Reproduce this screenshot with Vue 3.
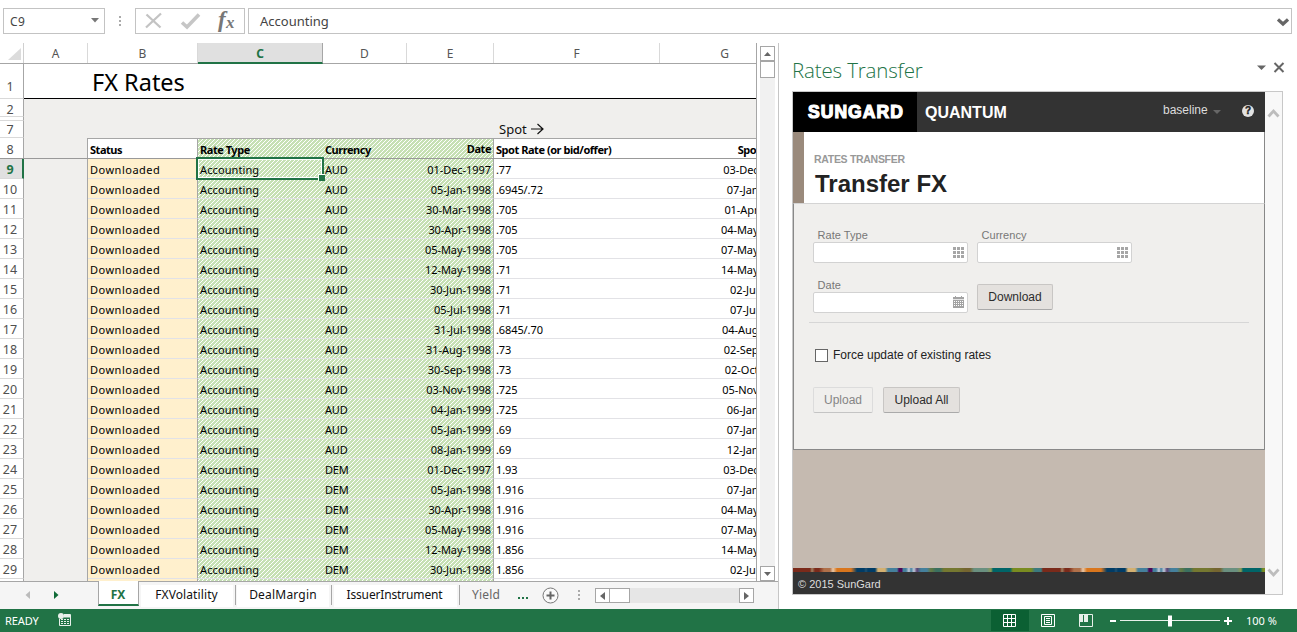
<script setup>
const rows = [
  ['Downloaded', 'Accounting', 'AUD', '01-Dec-1997', '.77', '03-Dec-1997'],
  ['Downloaded', 'Accounting', 'AUD', '05-Jan-1998', '.6945/.72', '07-Jan-1998'],
  ['Downloaded', 'Accounting', 'AUD', '30-Mar-1998', '.705', '01-Apr-1998'],
  ['Downloaded', 'Accounting', 'AUD', '30-Apr-1998', '.705', '04-May-1998'],
  ['Downloaded', 'Accounting', 'AUD', '05-May-1998', '.705', '07-May-1998'],
  ['Downloaded', 'Accounting', 'AUD', '12-May-1998', '.71', '14-May-1998'],
  ['Downloaded', 'Accounting', 'AUD', '30-Jun-1998', '.71', '02-Jul-1998'],
  ['Downloaded', 'Accounting', 'AUD', '05-Jul-1998', '.71', '07-Jul-1998'],
  ['Downloaded', 'Accounting', 'AUD', '31-Jul-1998', '.6845/.70', '04-Aug-1998'],
  ['Downloaded', 'Accounting', 'AUD', '31-Aug-1998', '.73', '02-Sep-1998'],
  ['Downloaded', 'Accounting', 'AUD', '30-Sep-1998', '.73', '02-Oct-1998'],
  ['Downloaded', 'Accounting', 'AUD', '03-Nov-1998', '.725', '05-Nov-1998'],
  ['Downloaded', 'Accounting', 'AUD', '04-Jan-1999', '.725', '06-Jan-1999'],
  ['Downloaded', 'Accounting', 'AUD', '05-Jan-1999', '.69', '07-Jan-1999'],
  ['Downloaded', 'Accounting', 'AUD', '08-Jan-1999', '.69', '12-Jan-1999'],
  ['Downloaded', 'Accounting', 'DEM', '01-Dec-1997', '1.93', '03-Dec-1997'],
  ['Downloaded', 'Accounting', 'DEM', '05-Jan-1998', '1.916', '07-Jan-1998'],
  ['Downloaded', 'Accounting', 'DEM', '30-Apr-1998', '1.916', '04-May-1998'],
  ['Downloaded', 'Accounting', 'DEM', '05-May-1998', '1.916', '07-May-1998'],
  ['Downloaded', 'Accounting', 'DEM', '12-May-1998', '1.856', '14-May-1998'],
  ['Downloaded', 'Accounting', 'DEM', '30-Jun-1998', '1.856', '02-Jul-1998'],
]
const cols = ['a', 'b', 'c', 'd', 'e', 'f', 'g']
</script>

<template>
  <div class="app">
    <div class="formula-bar">
      <div class="namebox"><span>C9</span><svg width="8" height="5"><path d="M0 0H8L4 4.5Z" fill="#777" /></svg></div>
      <div class="vdots"><i /><i /><i /></div>
      <div class="fxbox">
        <svg width="70" height="24" viewBox="0 0 70 24">
          <path d="M10.5 5.5L24.5 18.5M25 4.500L10 18.5" stroke="#c3c3c3" stroke-width="2.300" fill="none" />
          <path d="M46 13.500L51 18L63 5.500" stroke="#c6c6c6" stroke-width="3.600" fill="none" />
        </svg>
        <span class="fx-f">f</span><span class="fx-x">x</span>
      </div>
      <div class="formula"><span>Accounting</span>
        <svg width="12" height="9"><path d="M1 1.500L6 6L11 1.500" stroke="#666" stroke-width="3.200" fill="none" /></svg>
      </div>
    </div>

    <div class="main">
      <div class="book">
        <div class="sheet-area">
          <div class="sheet">
            <div class="colheads">
              <div class="rh corner"><svg width="13" height="12"><path d="M13 0V12H0Z" fill="#dcdcdc" /></svg></div>
              <div v-for="c in cols" :key="c" class="ch" :class="[c, { sel: c === 'c' }]">{{ c.toUpperCase() }}</div>
            </div>
            <div class="row r1"><div class="rh"><span>1</span></div><div class="title">FX Rates</div></div>
            <div class="row r2"><div class="rh">2</div><div class="fill" /></div>
            <div class="row rgap"><div class="rh" /><div class="fill" /></div>
            <div class="row r7"><div class="rh">7</div><div class="fill"><span class="spot">Spot</span><svg width="13" height="12"><path d="M0 6H12M6.500 1L12 6L6.500 11" stroke="#111" stroke-width="1.200" fill="none" /></svg></div></div>
            <div class="row r8">
              <div class="rh">8</div><div class="cell a" />
              <div class="cell b">Status</div><div class="cell c hatch">Rate Type</div><div class="cell d hatch">Currency</div>
              <div class="cell e hatch">Date</div><div class="cell f">Spot Rate (or bid/offer)</div><div class="cell g"><span>Spot Date</span></div>
            </div>
            <div v-for="(r, i) in rows" :key="i" class="row data" :class="{ cur: i === 0 }">
              <div class="rh">{{ i + 9 }}</div><div class="cell a" />
              <div class="cell b">{{ r[0] }}</div>
              <div class="cell c hatch">{{ r[1] }}<div v-if="i === 0" class="cursor" /></div>
              <div class="cell d hatch">{{ r[2] }}</div><div class="cell e hatch">{{ r[3] }}</div>
              <div class="cell f">{{ r[4] }}</div><div class="cell g"><span>{{ r[5] }}</span></div>
            </div>
            <div class="row data last">
              <div class="rh" /><div class="cell a" /><div class="cell b" /><div class="cell c hatch" /><div class="cell d hatch" /><div class="cell e hatch" /><div class="cell f" /><div class="cell g" />
            </div>
          </div>
          <div class="vscroll">
            <div class="sbtn"><svg width="7" height="4"><path d="M3.500 0L7 4H0Z" fill="#666" /></svg></div>
            <div class="vthumb" />
            <div class="grow" />
            <div class="sbtn"><svg width="7" height="4"><path d="M0 0H7L3.500 4Z" fill="#666" /></svg></div>
          </div>
        </div>
        <div class="tabs">
          <div class="nav">
            <svg width="5" height="8"><path d="M5 0V8L0.500 4Z" fill="#bbb" /></svg>
            <svg width="5" height="8"><path d="M0 0V8L4.500 4Z" fill="#106b38" /></svg>
          </div>
          <div class="tab active"><span>FX</span></div>
          <div class="tab t1"><span>FXVolatility</span></div><i class="sep" />
          <div class="tab t2"><span>DealMargin</span></div><i class="sep" />
          <div class="tab t3"><span>IssuerInstrument</span></div><i class="sep" />
          <div class="tab t4"><span>Yield</span></div>
          <div class="more"><i /><i /><i /></div>
          <svg class="plus" width="17" height="17"><circle cx="8.500" cy="8.500" r="7.500" fill="#fafafa" stroke="#777" /><path d="M4.500 8.500H12.500M8.500 4.500V12.500" stroke="#666" stroke-width="2" /></svg>
          <div class="vdots tdots"><i /><i /><i /></div>
          <div class="hscroll">
            <div class="sbtn"><svg width="5" height="8"><path d="M5 0V8L0 4Z" fill="#666" /></svg></div>
            <div class="hthumb" />
            <div class="grow" />
            <div class="sbtn"><svg width="5" height="8"><path d="M0 0V8L5 4Z" fill="#666" /></svg></div>
          </div>
        </div>
      </div>

      <div class="pane">
        <div class="pane-head">
          <span>Rates Transfer</span>
          <svg width="28" height="11"><path d="M0 3.500H9L4.500 8Z" fill="#666" /><path d="M17.500 1L26.500 10M26.500 1L17.500 10" stroke="#666" stroke-width="2" /></svg>
        </div>
        <div class="web">
          <div class="content">
            <div class="brand">
              <div class="logo"><span>SUNGARD</span></div>
              <div class="prod">QUANTUM</div>
              <div class="user">baseline</div>
              <svg class="caret" width="8" height="4"><path d="M0 0H8L4 4Z" fill="#666" /></svg>
              <div class="help">?</div>
            </div>
            <div class="heading"><small>RATES TRANSFER</small><h1>Transfer FX</h1></div>
            <div class="form">
              <div class="fields">
                <div class="field"><label>Rate Type</label><div class="input"><svg width="11" height="11"><path d="M0 1.500H11M0 5.500H11M0 9.500H11" stroke="#a6a6a6" stroke-width="3" stroke-dasharray="3 1" /></svg></div></div>
                <div class="field"><label>Currency</label><div class="input"><svg width="11" height="11"><path d="M0 1.500H11M0 5.500H11M0 9.500H11" stroke="#a6a6a6" stroke-width="3" stroke-dasharray="3 1" /></svg></div></div>
              </div>
              <div class="fields second">
                <div class="field"><label>Date</label><div class="input"><svg class="cal" width="11" height="12"><path d="M0 1H11V12H0Z" fill="#a3a3a3" /><path d="M2.500 0V1M8.500 0V1" stroke="#a3a3a3" /><path d="M0 3.500H11" stroke="#e4e4e4" /><path d="M1 5.500H10M1 7.500H10M1 9.500H10" stroke="#fff" stroke-dasharray="1 1" /></svg></div></div>
                <button class="dl">Download</button>
              </div>
              <hr />
              <div class="check"><i /><span>Force update of existing rates</span></div>
              <div class="btns"><button class="up off">Upload</button><button class="all">Upload All</button></div>
            </div>
            <div class="brown" />
            <div class="stripe" />
            <div class="foot">© 2015 SunGard</div>
          </div>
          <div class="webscroll">
            <svg width="13" height="10"><path d="M1.500 8.500L6.500 3L11.500 8.500" stroke="#bdbdbd" stroke-width="2.800" fill="none" /></svg>
            <svg width="13" height="10"><path d="M1.500 1.500L6.500 7L11.500 1.500" stroke="#bdbdbd" stroke-width="2.800" fill="none" /></svg>
          </div>
        </div>
      </div>
    </div>

    <div class="status">
      <span class="ready">READY</span>
      <svg class="macro" width="14" height="14"><path d="M6 1.500H12.500V12.500H1.500V6" stroke="#e8f0ea" fill="none" /><path d="M6 2H12V4.500H6Z" fill="#e8f0ea" /><circle cx="3" cy="3" r="3" fill="#e8f0ea" /><path d="M3 6.500H12M3 8.500H12M3 10.500H12" stroke="#e8f0ea" stroke-dasharray="2 1" /></svg>
      <div class="grow" />
      <div class="view on"><svg width="13" height="13"><path d="M0.500 0.500H12.500V12.500H0.500ZM4.500 0V13M8.500 0V13M0 4.500H13M0 8.500H13" stroke="#fff" fill="none" /></svg></div>
      <div class="view"><svg width="14" height="13"><path d="M0.500 0.500H13.500V12.500H0.500Z" stroke="#fff" fill="none" /><path d="M3.500 2.500H10.500V10.500H3.500ZM5 4.500H9M5 6.500H9M5 8.500H9" stroke="#fff" fill="none" /></svg></div>
      <div class="view"><svg width="14" height="13"><path d="M0.500 0.500H13.500V12.500H0.500Z" stroke="#e8f0ea" fill="none" /><path d="M0 0H4V8H0ZM5 0H9V8H5Z" fill="#e8f0ea" /></svg></div>
      <svg class="zoom" width="113" height="12"><path d="M1 6H7" stroke="#fff" stroke-width="2" /><path d="M11 5.500H111" stroke="#e8f0ea" /><path d="M59 0.500H63V11.500H59Z" fill="#fff" /></svg>
      <svg class="zplus" width="8" height="8"><path d="M0 4H8M4 0V8" stroke="#fff" stroke-width="2" /></svg>
      <span class="pct">100 %</span>
    </div>
  </div>
</template>

<style>
body { margin: 0; background: #fff; overflow: hidden; }
</style>

<style scoped>
* { box-sizing: border-box; }
svg { display: block; flex: none; }
.grow { flex: 1; }
.app { width: 1297px; height: 632px; display: flex; flex-direction: column; background: #fff; font-family: "Noto Sans", "Open Sans", sans-serif; color: #111; overflow: hidden; white-space: nowrap; }
.formula-bar { height: 43px; padding: 8px 5px 0 3px; display: flex; flex: none; align-items: flex-start; font-size: 13px; color: #444; }
.formula-bar > div:not(.vdots) { height: 26px; border: 1px solid #c3c3c3; display: flex; align-items: center; }
.namebox { width: 102px; padding: 0 5px 0 6px; justify-content: space-between; font-size: 12px; letter-spacing: 0.3px; }
.namebox svg { margin-top: -2px; }
.vdots { display: flex; flex-direction: column; gap: 2px; width: 2px; margin: 8px 14px 0; }
.vdots i { width: 2px; height: 2px; background: #aaa; }
.fxbox { width: 110px; }
.fx-f, .fx-x { font: italic bold 23px/24px "Liberation Serif", serif; color: #777; width: 9px; margin-left: 12px; margin-top: -2px; }
.fx-x { font-size: 17px; margin: 3px 0 0 -1px; }
.formula { width: 1044px; margin-left: 3px; padding: 0 2px 0 11px; justify-content: space-between; }
.formula svg { margin-top: 3px; }
.main { display: flex; height: 566px; flex: none; }
.book { width: 779px; border-right: 1px solid #c6c6c6; flex: none; }
.sheet-area { display: flex; height: 538px; }
.sheet { width: 757px; border-right: 1px solid #a6a6a6; overflow: hidden; flex: none; }
.colheads { display: flex; height: 21px; border-bottom: 1px solid #a6a6a6; background: #fff; }
.ch { height: 20px; font-size: 12px; line-height: 22px; color: #555; text-align: center; flex: none; border-right: 1px solid #d9d9d9; }
.ch.sel { height: 21px; background: #e0e0e0; border-bottom: 2px solid #217346; border-right-color: #a6a6a6; color: #217346; font-weight: bold; }
.rh { width: 24px; border-right: 1px solid #a6a6a6; border-bottom: 1px solid #d9d9d9; flex: none; background: #fff; color: #505050; font-size: 12.5px; padding-right: 3px; text-align: center; line-height: 20px; }
.corner { padding: 5px 0 0 8px; border-bottom: 0; border-right-color: #d0d0d0; }
.a { width: 64px; } .b { width: 110px; } .c { width: 125px; } .d { width: 84px; } .e { width: 87px; } .f { width: 166px; } .g { width: 130px; }
.row { display: flex; position: relative; }
.r1 { height: 35px; }
.r1 .rh { line-height: 45px; }
.title { flex: 1; border-bottom: 1px solid #000; font-size: 23.5px; line-height: 36px; padding-left: 68px; color: #000; }
.fill { flex: 1; background: #f0efed; display: flex; align-items: center; }
.r2 { height: 18px; } .r2 .rh { line-height: 21px; }
.rgap { height: 4px; }
.r7 { height: 17px; } .r7 .rh { line-height: 18px; }
.r7 .fill { padding: 0 0 1px 475px; font-size: 13px; gap: 4px; }
.r8 { height: 21px; border-bottom: 1px solid #999; font-size: 11px; font-weight: bold; letter-spacing: -0.46px; }
.r8 .rh { font-weight: normal; border-bottom: 0; line-height: 23px; letter-spacing: 0; }
.cell { flex: none; line-height: 22px; padding-left: 2px; position: relative; color: #000; }
.r8 .cell:not(.a) { border-top: 1px solid #a6a6a6; }
.cell.a { background: #f0efed; border-right: 1px solid #a6a6a6; padding: 0; }
.cell.b, .cell.e { border-right: 1px solid #a6a6a6; }
.cell.e { text-align: right; padding-right: 2px; }
.cell.g { text-align: right; padding-right: 3px; }
.hatch { background: linear-gradient(135deg, #c6e0b4 0 44%, #fff 44% 56%, #c6e0b4 56%) 1px 0 / 4px 4px; background-clip: padding-box; }
.hatch.c { background-position: 2px 0; }
.r8 .hatch { background-position: 1px -1px; }
.r8 .hatch.c { background-position: 2px -1px; }
.r8 .e { line-height: 20px; }
.data { height: 20px; font-size: 11px; letter-spacing: 0.1px; }
.data .cell:not(.a) { border-bottom: 1px solid #e2e2e6; }
.data .b { background: #fff0cd; letter-spacing: 0.5px; }
.data .d { letter-spacing: -0.2px; }
.data .e, .data .g { letter-spacing: -0.05px; }
.data .f { letter-spacing: -0.1px; }
.data.last { height: 3px; }
.data.last .cell { border-bottom: 0 !important; }
.data .rh { letter-spacing: 0; line-height: 21px; }
.cur .rh { background: #e0e0e0; border-right: 2px solid #217346; color: #217346; font-weight: bold; padding-right: 2px; }
.cursor { position: absolute; left: -2px; top: -2px; width: 128px; height: 23px; border: 2px solid #217346; outline: 1px solid #fff; outline-offset: -3px; z-index: 2; }
.cursor::after { content: ""; position: absolute; right: -3px; bottom: -3px; width: 6px; height: 6px; background: #217346; border: 1px solid #fff; border-width: 1px 0 0 1px; }
.vscroll { width: 15px; margin: 3px 0 0 3px; display: flex; flex-direction: column; background: #f1f1f1; }
.sbtn { width: 15px; height: 15px; border: 1px solid #a6a6a6; background: #fff; display: flex; align-items: center; justify-content: center; flex: none; }
.vthumb { height: 17px; border: 1px solid #a6a6a6; background: #fff; }
.tabs { height: 28px; border-top: 1px solid #a6a6a6; background: #f5f5f5; display: flex; font-size: 12px; width: 778px; }
.nav { width: 98px; display: flex; padding: 9px 0 0 25px; gap: 24px; flex: none; }
.tab { height: 22px; margin-top: 3px; background: #fff; text-align: center; line-height: 19px; flex: none; color: #111; }
.tab.active { width: 41px; height: 25px; margin-top: -1px; border: 1px solid #a6a6a6; border-top: 0; border-bottom: 2px solid #217346; color: #217346; font-weight: bold; line-height: 27px; margin-right: 2px; padding-right: 1px; }
.tab.t1 { width: 92px; margin-right: 2px; padding-right: 1px; letter-spacing: 0.1px; }
.tab.t2 { width: 92px; margin: 3px 2px 0 1px; letter-spacing: 0.2px; }
.tab.t3 { width: 123px; margin: 3px 2px 0 2px; letter-spacing: -0.15px; padding-right: 2px; }
.tab.t4 { width: 52px; color: #666; background: none; letter-spacing: 0.2px; }
.sep { width: 1px; height: 20px; background: #a6a6a6; margin-top: 3px; flex: none; }
.more { display: flex; gap: 2px; margin: 15px 0 0 6px; width: 11px; }
.more i { width: 2px; height: 2px; background: #217346; }
.plus { margin: 5px 0 0 13px; }
.vdots.tdots { margin: 8px 15px 0 19px; }
.hscroll { display: flex; width: 159px; height: 15px; background: #e6e6e6; margin-top: 6px; }
.hthumb { width: 20px; border: 1px solid #a6a6a6; border-left: 0; background: #fff; }
.pane { padding-left: 13px; width: 518px; }
.pane-head { height: 48px; display: flex; justify-content: space-between; padding: 9px 12px 0 0; }
.pane-head span { font: 300 20.500px/36px "Open Sans", "Noto Sans", sans-serif; letter-spacing: -0.15px; color: #217346; }
.pane-head svg { margin-top: 10px; }
.web { width: 491px; height: 504px; border: 1px solid #c8c8c8; display: flex; font-family: "Liberation Sans", Arial, sans-serif; }
.content { width: 472px; display: flex; flex-direction: column; }
.brand { height: 40px; background: #333; display: flex; align-items: center; color: #fff; flex: none; }
.logo { width: 124px; height: 40px; background: #000; font: 900 17.500px/40px "Liberation Sans", sans-serif; -webkit-text-stroke: 1.200px #fff; letter-spacing: 1.050px; padding-left: 15px; }
.prod { font-weight: bold; font-size: 16px; margin: 2px 0 0 8px; width: 238px; }
.user { font-size: 12px; color: #ddd; width: 50px; margin-top: -4px; }
.caret { margin-top: -1px; }
.help { margin: -2px 0 0 21px; width: 12px; height: 12px; border-radius: 6px; background: #e2e2e2; color: #222; font: bold 10px/12px "Liberation Sans", sans-serif; text-align: center; -webkit-text-stroke: 0.400px #222; }
.heading { height: 71px; border-left: 11px solid #9a8a7c; border-right: 1px solid #888; padding: 21px 0 0 10px; flex: none; background: #fff; }
.heading small { display: block; font-size: 10.500px; line-height: 12px; font-weight: bold; letter-spacing: -0.3px; color: #999; }
.heading h1 { margin: 4px 0 0 1px; font-size: 24px; line-height: 29px; color: #222; }
.form { height: 247px; flex: none; background: #f0efed; border: 1px solid #888; border-top-color: #d4d4d4; padding: 25px 15px 0 19px; color: #333; }
.fields { display: flex; gap: 9px; height: 50px; }
.field { width: 155px; }
.field label { display: block; font-size: 11px; line-height: 12px; height: 13px; padding-left: 4.5px; letter-spacing: 0.05px; color: #777; }
.input { height: 21px; background: #fff; border: 1px solid #d2d2d2; border-radius: 2px; display: flex; align-items: center; justify-content: flex-end; padding-right: 3px; }
.cal { margin-top: -1px; }
button { height: 26px; font: 12px "Liberation Sans", sans-serif; border: 1px solid #c8c6c4; border-bottom-color: #aaa; border-radius: 2px; background: #e4e1de; color: #2c2c2c; padding: 0; }
.dl { width: 76px; margin-top: 5px; }
.up { width: 60px; } .all { width: 77px; }
.off { background: #f0efed; color: #858585; border-color: #dcdcdc; border-bottom-color: #c4c4c4; }
hr { border: 0; border-top: 1px solid #d6d6d6; margin: -7px 0 0 -4px; }
.check { display: flex; align-items: center; gap: 5px; font-size: 12px; color: #222; margin: 25px 0 0 2px; height: 15px; }
.check i { width: 13px; height: 13px; background: #fff; border: 1px solid #666; }
.check span { margin-top: -2px; }
.btns { display: flex; gap: 10px; margin-top: 24px; }
.brown { flex: 1; background: #c5bab0; }
.stripe { height: 4px; background: repeating-linear-gradient(90deg, #7b2a1a 0 17px, #a08060 19px, #7b2a1a 22px 26px, #b0714a 31px 37px, #e8c8a8 40px, #d9761d 44px 58px, #003c66 64px 71px, #205070 73px, #003c66 75px 82px, #d4b070 85px 92px, #45809c 95px 104px, #4b0857 106px 109px, #45809c 110px 113px, #c0c8d8 116px, #45809c 118px, #c0c8d8 121px, #5a4070 124px, #45809c 128px 134px, #657a40 138px, #3a7060 143px 147px, #757830 151px 165px, #756530 172px 177px, #6a9080 181px 194px, #8c9850 198px, #006568 200px 217px, #7a8c20 220px 238px, #3a7a80 242px 248px, #7b2a1a 250px); }
.foot { height: 22px; background: #333; color: #ddd; font-size: 11px; line-height: 24px; padding-left: 5px; }
.webscroll { width: 17px; background: #f8f8f8; display: flex; flex-direction: column; justify-content: space-between; padding: 16px 0 16px 2px; }
.status { height: 23px; background: #217346; color: #fff; display: flex; align-items: center; font-size: 11px; flex: none; }
.ready { margin: -1px 0 0 5px; width: 53px; letter-spacing: -0.1px; }
.macro { margin-top: -2px; }
.view { width: 38px; height: 21px; display: flex; align-items: center; justify-content: center; }
.view svg { margin-top: -1px; }
.view.on { background: #0b6033; padding-right: 1px; }
.zoom { width: 113px; margin-left: 4px; }
.zplus { margin-left: 2px; }
.pct { margin: -1px 0 0 14px; width: 51px; }
</style>
